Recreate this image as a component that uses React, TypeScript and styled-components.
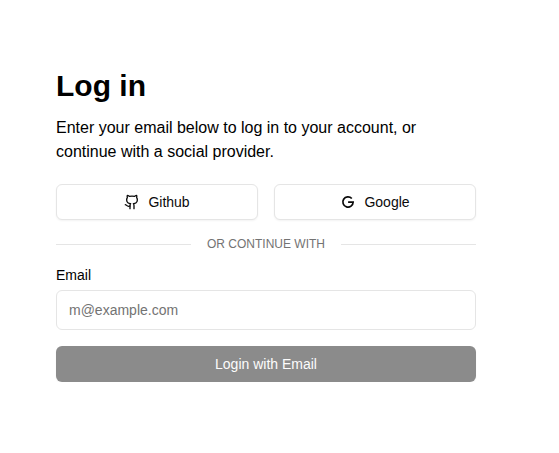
import React from "react";
import styled, { createGlobalStyle } from "styled-components";

const GlobalStyle = createGlobalStyle`
  *, *::before, *::after { box-sizing: border-box; }
  body {
    margin: 0;
    background: #fff;
    color: #000;
    font-family: "Liberation Sans", Arial, sans-serif;
    font-size: 16px;
    line-height: 24px;
  }
`;

const Page = styled.main`
  width: 532px;
  padding: 68px 56px 0;
`;

const Title = styled.h1`
  margin: 0;
  font-size: 30px;
  line-height: 36px;
  font-weight: 700;
`;

const Description = styled.p`
  margin: 12px 0 20px;
`;

const Providers = styled.div`
  display: grid;
  grid-template-columns: 1fr 1fr;
  gap: 16px;
`;

const Button = styled.button<{ $primary?: boolean }>`
  display: flex;
  align-items: center;
  justify-content: center;
  gap: 8px;
  width: 100%;
  height: 36px;
  padding: 0 16px;
  border: ${(p) => (p.$primary ? "0" : "1px solid #e5e5e5")};
  border-radius: 6px;
  background: ${(p) => (p.$primary ? "#8b8b8b" : "#fff")};
  color: ${(p) => (p.$primary ? "#fcfcfc" : "#0a0a0a")};
  box-shadow: 0 1px 2px rgba(0, 0, 0, 0.05);
  font: 500 14px/20px "Liberation Sans", Arial, sans-serif;
`;

const Icon = styled.svg`
  width: 16px;
  height: 16px;
  flex: none;
`;

const Divider = styled.div`
  display: flex;
  align-items: center;
  gap: 16px;
  margin: 16px 0;
  color: #737373;
  font-size: 12px;
  line-height: 16px;
  white-space: nowrap;

  &::before, &::after {
    content: "";
    flex: 1;
    height: 1px;
    background: #e5e5e5;
  }
`;

const Label = styled.label`
  display: block;
  margin-bottom: 8px;
  font-size: 14px;
  line-height: 14px;
  font-weight: 500;
`;

const Input = styled.input`
  display: block;
  width: 100%;
  height: 40px;
  margin-bottom: 16px;
  padding: 8px 12px;
  border: 1px solid #e5e5e5;
  border-radius: 6px;
  background: #fff;
  font: 14px/20px "Liberation Sans", Arial, sans-serif;
  outline: none;

  &::placeholder { color: #737373; opacity: 1; }
`;

export default function App() {
  return (
    <>
      <GlobalStyle />
      <Page>
        <Title>Log in</Title>
        <Description>
          Enter your email below to log in to your account, or continue with a social provider.
        </Description>
        <Providers>
          <Button type="button">
            <Icon viewBox="0 0 24 24" fill="none" stroke="currentColor" strokeWidth="2" strokeLinecap="round" strokeLinejoin="round">
              <path d="M15 22v-4a4.8 4.8 0 0 0-1-3.5c3 0 6-2 6-5.5.08-1.25-.27-2.48-1-3.5.28-1.15.28-2.35 0-3.5 0 0-1 0-3 1.5-2.64-.5-5.36-.5-8 0C6 2 5 2 5 2c-.3 1.15-.3 2.35 0 3.5A5.403 5.403 0 0 0 4 9c0 3.5 3 5.5 6 5.5-.39.49-.68 1.05-.85 1.65-.17.6-.22 1.23-.15 1.85v4" />
              <path d="M9 18c-4.51 2-5-2-7-2" />
            </Icon>
            Github
          </Button>
          <Button type="button">
            <Icon viewBox="0 0 16 16" fill="none" stroke="currentColor" strokeWidth="1.75">
              <path d="M11.8 4.5A5.15 5.15 0 1 0 13.15 8.1H8.1" />
            </Icon>
            Google
          </Button>
        </Providers>
        <Divider>OR CONTINUE WITH</Divider>
        <Label htmlFor="email">Email</Label>
        <Input id="email" type="email" placeholder="m@example.com" />
        <Button type="submit" $primary>Login with Email</Button>
      </Page>
    </>
  );
}
